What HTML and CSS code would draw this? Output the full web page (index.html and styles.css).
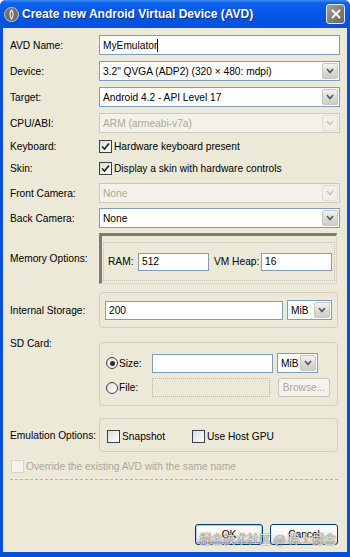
FILE: index.html
```html
<!DOCTYPE html>
<html lang="en">

<head>
  <meta charset="UTF-8">
  <title>Create new Android Virtual Device (AVD)</title>
  <meta name="viewport" content="width=device-width, initial-scale=1.0">
  <link rel="stylesheet" href="styles.css">
</head>

<body>

  <div class="window">
    <div class="titlebar">
      <span class="app-icon">
        <svg width="15" height="15" viewBox="0 0 15 15">
          <circle cx="7.5" cy="7.5" r="7" fill="#6f6f6a" stroke="#c9c9c2" stroke-width="1"/>
          <path d="M7.5 3 C5.5 5 5.5 9 7.5 12 C9.5 9 9.5 5 7.5 3 Z" fill="none" stroke="#f0f0ea" stroke-width="1.2"/>
        </svg>
      </span>
      <span class="title">Create new Android Virtual Device (AVD)</span>
      <span class="close-btn">
        <svg width="10" height="10" viewBox="0 0 10 10">
          <path d="M1 1 L9 9 M9 1 L1 9" stroke="#fff" stroke-width="2"/>
        </svg>
      </span>
    </div>

    <div class="dialog">
      <div class="row row-name">
        <span class="lbl">AVD Name:</span>
        <div class="textbox wide">MyEmulator<span class="caret"></span></div>
      </div>

      <div class="row row-field">
        <span class="lbl">Device:</span>
        <div class="combo wide">
          <span class="combo-text">3.2" QVGA (ADP2) (320 × 480: mdpi)</span>
          <span class="combo-btn"><svg width="8" height="6" viewBox="0 0 8 6"><path d="M1 1 L4 4.5 L7 1" stroke="#4a5566" stroke-width="1.6" fill="none"/></svg></span>
        </div>
      </div>

      <div class="row row-field">
        <span class="lbl">Target:</span>
        <div class="combo wide">
          <span class="combo-text">Android 4.2 - API Level 17</span>
          <span class="combo-btn"><svg width="8" height="6" viewBox="0 0 8 6"><path d="M1 1 L4 4.5 L7 1" stroke="#4a5566" stroke-width="1.6" fill="none"/></svg></span>
        </div>
      </div>

      <div class="row row-field">
        <span class="lbl">CPU/ABI:</span>
        <div class="combo wide disabled">
          <span class="combo-text">ARM (armeabi-v7a)</span>
          <span class="combo-btn"><svg width="8" height="6" viewBox="0 0 8 6"><path d="M1 1 L4 4.5 L7 1" stroke="#c8c6bb" stroke-width="1.6" fill="none"/></svg></span>
        </div>
      </div>

      <div class="row row-check first-check">
        <span class="lbl">Keyboard:</span>
        <span class="checkbox checked"><svg width="9" height="9" viewBox="0 0 9 9"><path d="M1 4.5 L3.5 7 L8 1.5" stroke="#1e2a1e" stroke-width="1.7" fill="none"/></svg></span>
        <span class="check-text">Hardware keyboard present</span>
      </div>

      <div class="row row-check">
        <span class="lbl">Skin:</span>
        <span class="checkbox checked"><svg width="9" height="9" viewBox="0 0 9 9"><path d="M1 4.5 L3.5 7 L8 1.5" stroke="#1e2a1e" stroke-width="1.7" fill="none"/></svg></span>
        <span class="check-text">Display a skin with hardware controls</span>
      </div>

      <div class="row row-field row-front">
        <span class="lbl">Front Camera:</span>
        <div class="combo wide disabled">
          <span class="combo-text">None</span>
          <span class="combo-btn"><svg width="8" height="6" viewBox="0 0 8 6"><path d="M1 1 L4 4.5 L7 1" stroke="#c8c6bb" stroke-width="1.6" fill="none"/></svg></span>
        </div>
      </div>

      <div class="row row-field row-back">
        <span class="lbl">Back Camera:</span>
        <div class="combo wide">
          <span class="combo-text">None</span>
          <span class="combo-btn"><svg width="8" height="6" viewBox="0 0 8 6"><path d="M1 1 L4 4.5 L7 1" stroke="#4a5566" stroke-width="1.6" fill="none"/></svg></span>
        </div>
      </div>

      <div class="row row-memory">
        <span class="lbl">Memory Options:</span>
        <div class="memory-group">
          <div class="memory-inner">
            <span class="mem-lbl ram">RAM:</span>
            <div class="textbox mem-box">512</div>
            <span class="mem-lbl heap">VM Heap:</span>
            <div class="textbox mem-box">16</div>
          </div>
        </div>
      </div>

      <div class="row row-storage">
        <span class="lbl">Internal Storage:</span>
        <div class="group storage-group">
          <div class="textbox storage-box">200</div>
          <div class="combo unit-combo">
            <span class="combo-text">MiB</span>
            <span class="combo-btn"><svg width="8" height="6" viewBox="0 0 8 6"><path d="M1 1 L4 4.5 L7 1" stroke="#4a5566" stroke-width="1.6" fill="none"/></svg></span>
          </div>
        </div>
      </div>

      <div class="row row-sd">
        <span class="lbl sd-lbl">SD Card:</span>
        <div class="group sd-group">
          <div class="sd-line">
            <span class="radio-item"><span class="radio on"></span>Size:</span>
            <div class="textbox sd-size"></div>
            <div class="combo sd-unit">
              <span class="combo-text">MiB</span>
              <span class="combo-btn"><svg width="8" height="6" viewBox="0 0 8 6"><path d="M1 1 L4 4.5 L7 1" stroke="#4a5566" stroke-width="1.6" fill="none"/></svg></span>
            </div>
          </div>
          <div class="sd-line second">
            <span class="radio-item"><span class="radio"></span>File:</span>
            <div class="textbox sd-file disabled"></div>
            <span class="btn browse disabled">Browse...</span>
          </div>
        </div>
      </div>

      <div class="row row-emu">
        <span class="lbl">Emulation Options:</span>
        <div class="group emu-group">
          <span class="emu-item"><span class="checkbox"></span>Snapshot</span>
          <span class="emu-item"><span class="checkbox"></span>Use Host GPU</span>
        </div>
      </div>

      <div class="row row-override">
        <span class="checkbox disabled"></span>
        <span class="check-text dim">Override the existing AVD with the same name</span>
      </div>

      <div class="separator"></div>

      <div class="actions">
        <span class="btn action default">OK</span>
        <span class="btn action">Cancel</span>
        <span class="watermark">掘金技术社区 @ 稀土掘金</span>
      </div>
    </div>
  </div>

</body>

</html>
```

FILE: styles.css
```css
* {
  box-sizing: border-box;
  margin: 0;
  padding: 0;
}

body {
  background: #fff;
  font-family: 'Liberation Sans', Arial, sans-serif;
  font-size: 10.2px;
  color: #000;
}

.window {
  width: 350px;
  height: 557px;
  background: #0750dc;
  border-radius: 6px 6px 0 0;
  display: flex;
  flex-direction: column;
  overflow: hidden;
}

/* title bar */

.titlebar {
  height: 28px;
  flex: none;
  display: flex;
  align-items: center;
  padding: 0 5px 0 4px;
  background: linear-gradient(#3d8cf6 0, #0d62ea 3px, #0558e6 45%, #0352e0 80%, #0a4fd8 100%);
}

.app-icon {
  width: 15px;
  height: 15px;
  display: flex;
}

.title {
  margin-left: 3px;
  color: #fff;
  font-weight: bold;
  font-size: 12px;
  text-shadow: 1px 1px 0 #0a2f8a;
  white-space: nowrap;
}

.close-btn {
  margin-left: auto;
  width: 19px;
  height: 20px;
  border: 1px solid #e6e6e0;
  border-radius: 3px;
  background: linear-gradient(135deg, #a3a39c, #7a7a72 60%, #6c6c64);
  display: flex;
  align-items: center;
  justify-content: center;
}

/* dialog body */

.dialog {
  flex: 1;
  margin: 0 3px 5px;
  background: #ece9d8;
  padding: 0 7px;
  display: flex;
  flex-direction: column;
}

.row {
  display: flex;
  align-items: center;
}

.lbl {
  width: 89px;
  flex: none;
  white-space: nowrap;
}

.row-name {
  margin-top: 7px;
  height: 20px;
}

.row-field {
  margin-top: 6px;
  height: 20px;
}

.row-check {
  height: 22px;
}

.first-check {
  margin-top: 2px;
}

.row-front {
  margin-top: 4px;
}

.row-back {
  margin-top: 5px;
}

.wide {
  flex: 1;
  height: 20px;
}

/* inputs */

.textbox {
  background: #fff;
  border: 1px solid #7f9db9;
  display: flex;
  align-items: center;
  padding-left: 3px;
  white-space: nowrap;
}

.textbox.disabled {
  background: #ece9d8;
  border: 1px dotted #b9b7aa;
}

.caret {
  width: 1px;
  height: 13px;
  background: #000;
}

.combo {
  background: #fff;
  border: 1px solid #7f9db9;
  display: flex;
  align-items: center;
  padding: 1px;
}

.combo-text {
  flex: 1;
  padding-left: 2px;
  white-space: nowrap;
  overflow: hidden;
}

.combo-btn {
  width: 16px;
  height: 100%;
  flex: none;
  background: linear-gradient(#f4f4f0, #dcdbd3 55%, #cfcdc4);
  border: 1px solid #c3c8cf;
  border-radius: 2px;
  display: flex;
  align-items: center;
  justify-content: center;
}

.combo.disabled {
  background: #f3f2ea;
  border-color: #cdcbbf;
  color: #aca899;
}

.combo.disabled .combo-btn {
  background: #f1f0e8;
  border-color: #e0ded4;
}

/* checkboxes and radios */

.checkbox {
  width: 13px;
  height: 13px;
  flex: none;
  border: 1px solid #34424f;
  background: linear-gradient(135deg, #dcdcd6, #fff);
  display: flex;
  align-items: center;
  justify-content: center;
}

.checkbox.disabled {
  border-color: #d6d4c8;
  background: #f5f4ee;
}

.check-text {
  margin-left: 2px;
  white-space: nowrap;
}

.check-text.dim {
  color: #aca899;
}

.radio {
  width: 12px;
  height: 12px;
  border: 1px solid #39434d;
  border-radius: 50%;
  background: linear-gradient(135deg, #dcdcd6, #fff);
  display: flex;
  align-items: center;
  justify-content: center;
  margin-right: 1px;
}

.radio.on::after {
  content: "";
  width: 5px;
  height: 5px;
  border-radius: 50%;
  background: #2a2f33;
}

/* groups */

.group {
  flex: 1;
  margin-right: 2px;
  border: 1px solid #d2d0c1;
  border-radius: 4px;
}

.row-memory {
  margin-top: 5px;
  height: 51px;
}

.memory-group {
  flex: 1;
  height: 100%;
  margin-right: 3px;
  border-top: 3px solid #7d7c70;
  border-left: 3px solid #7d7c70;
  border-right: 1px solid #dad8ca;
  border-bottom: 1px solid #dad8ca;
  padding: 6px 1px 2px 1px;
}

.memory-inner {
  height: 100%;
  border: 1px dotted #c2c0b2;
  display: flex;
  align-items: center;
  padding-left: 4px;
}

.mem-lbl.ram {
  width: 30px;
}

.mem-lbl.heap {
  width: 47px;
  margin-left: 5px;
}

.mem-box {
  width: 71px;
  height: 18px;
}

.row-storage {
  margin-top: 8px;
  height: 36px;
}

.storage-group {
  height: 100%;
  display: flex;
  align-items: center;
  padding-left: 5px;
}

.storage-box {
  width: 178px;
  height: 19px;
}

.unit-combo {
  width: 45px;
  height: 20px;
  margin-left: 4px;
}

.row-sd {
  margin-top: 14px;
  height: 64px;
  align-items: flex-start;
}

.sd-lbl {
  margin-top: -4px;
}

.sd-group {
  height: 100%;
  padding: 10px 0 0 6px;
}

.sd-line {
  display: flex;
  align-items: center;
  height: 20px;
}

.sd-line.second {
  margin-top: 5px;
  height: 19px;
}

.radio-item {
  width: 46px;
  display: flex;
  align-items: center;
}

.sd-size {
  width: 121px;
  height: 19px;
}

.sd-unit {
  width: 41px;
  height: 20px;
  margin-left: 4px;
}

.sd-file {
  width: 118px;
  height: 19px;
}

.row-emu {
  margin-top: 12px;
  height: 34px;
}

.emu-group {
  height: 100%;
  display: flex;
  align-items: center;
  padding: 2px 0 0 7px;
}

.emu-item {
  display: flex;
  align-items: center;
  gap: 2px;
  width: 85px;
}

.row-override {
  margin-top: 7px;
  height: 14px;
  padding-left: 1px;
}

.separator {
  margin: 6px 2px 0 0;
  border-top: 1px dashed #b4b2a5;
}

/* buttons */

.btn {
  display: flex;
  align-items: center;
  justify-content: center;
  border: 1px solid #003c74;
  border-radius: 3px;
  background: linear-gradient(#ffffff, #f3f2ee 60%, #d9d5cb);
}

.btn.disabled {
  border-color: #c9c7ba;
  color: #aca899;
  background: #f4f3ee;
}

.browse {
  width: 52px;
  height: 19px;
  margin-left: 8px;
}

.actions {
  position: relative;
  margin-top: 44px;
  margin-right: 2px;
  display: flex;
  justify-content: flex-end;
  gap: 7px;
}

.action {
  width: 68px;
  height: 21px;
}

.action.default {
  box-shadow: inset 0 0 0 1px #aecbf3, inset 0 -2px 0 #7aa2e3;
}

.watermark {
  position: absolute;
  right: 2px;
  top: 6px;
  font-family: 'Noto Sans CJK SC', sans-serif;
  font-size: 12px;
  color: rgba(255, 255, 255, 0.85);
  text-shadow: 0 0 1px #555, 0 0 1px #555;
  white-space: nowrap;
}
```
